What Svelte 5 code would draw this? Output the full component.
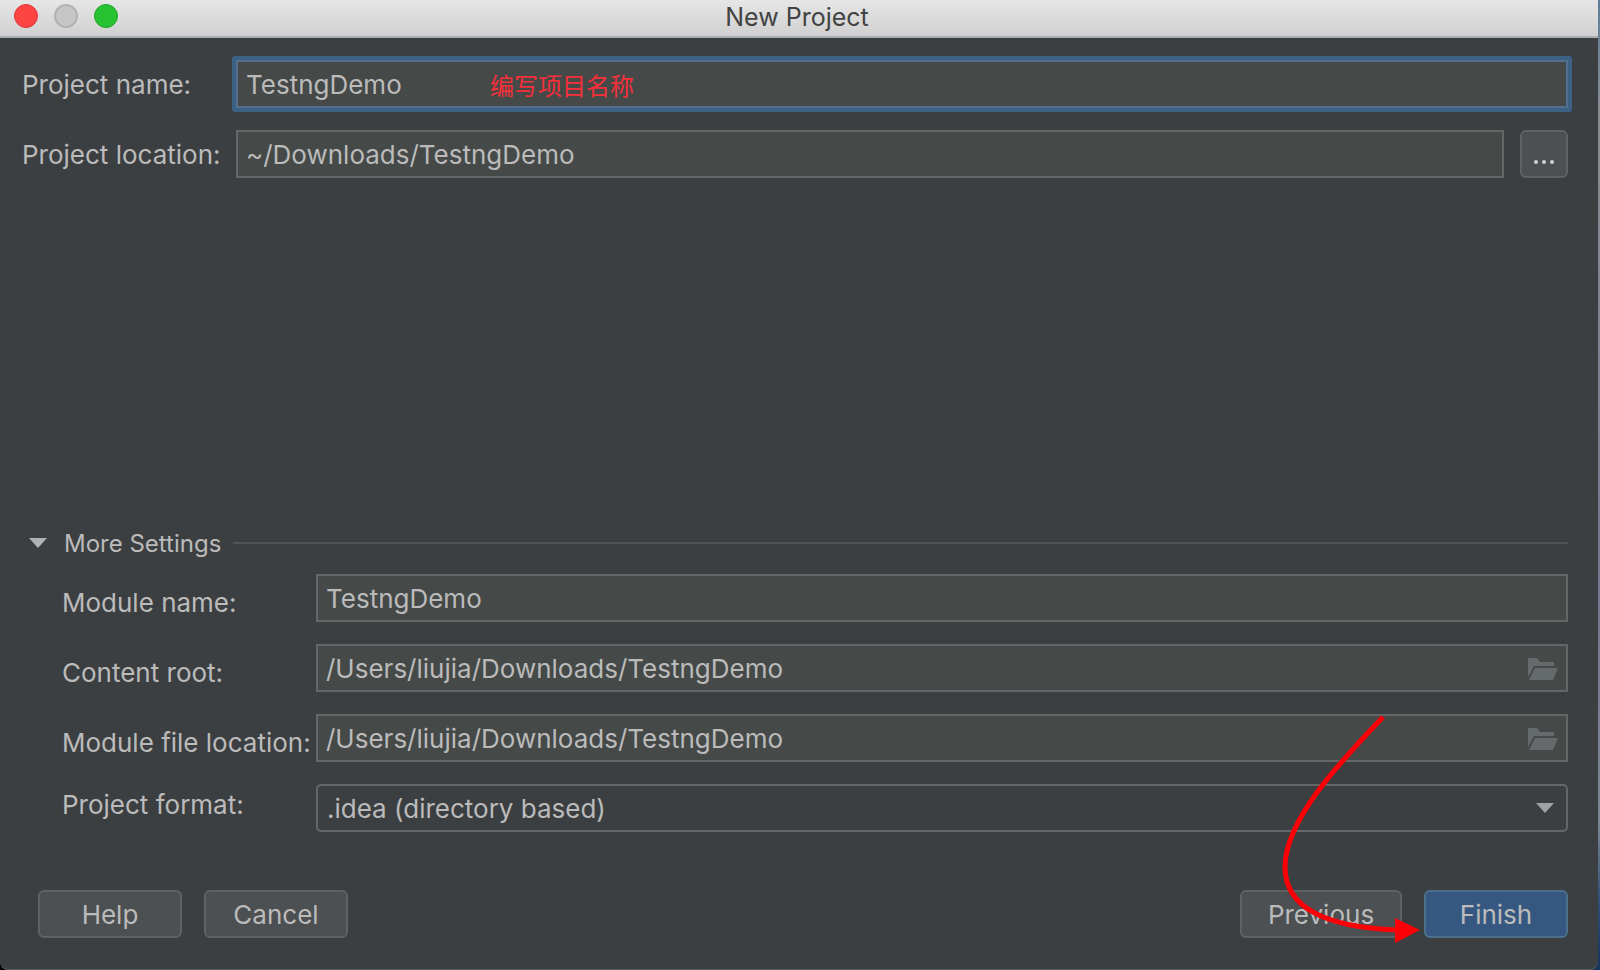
<script lang="ts">
  let projectName = $state('TestngDemo');
  let projectLocation = $state('~/Downloads/TestngDemo');
  let moduleName = $state('TestngDemo');
  let contentRoot = $state('/Users/liujia/Downloads/TestngDemo');
  let moduleLocation = $state('/Users/liujia/Downloads/TestngDemo');
  let format = $state('idea');
</script>

{#snippet folder()}
  <button type="button" class="browse" aria-label="Browse">
    <svg width="30" height="22" viewBox="0 0 30 22">
      <path d="M0 0H9L12 4H26V8H6L0 19Z" />
      <path d="M7 10H30L25 22H1Z" />
    </svg>
  </button>
{/snippet}

<div class="desktop">
  <div class="window">
    <header class="titlebar">
      <div class="lights">
        <button type="button" class="light close" aria-label="Close"></button>
        <button type="button" class="light minimize" aria-label="Minimize"></button>
        <button type="button" class="light zoom" aria-label="Zoom"></button>
      </div>
      <h1>New Project</h1>
    </header>

    <main>
      <div class="form project">
        <label for="project-name">Project name:</label>
        <div class="field focused">
          <input id="project-name" type="text" bind:value={projectName} spellcheck="false" />
          <span class="note">编写项目名称</span>
        </div>

        <label for="project-location">Project location:</label>
        <div class="with-button">
          <div class="field">
            <input id="project-location" type="text" bind:value={projectLocation} spellcheck="false" />
          </div>
          <button type="button" class="btn more" aria-label="Choose location">
            <svg width="20" height="4" viewBox="0 0 20 4">
              <circle cx="2" cy="2" r="2" />
              <circle cx="10" cy="2" r="2" />
              <circle cx="18" cy="2" r="2" />
            </svg>
          </button>
        </div>
      </div>

      <section class="settings">
        <button type="button" class="toggle" aria-expanded="true">
          <svg width="18" height="10" viewBox="0 0 18 10"><path d="M0 0H18L9 10Z" /></svg>
          <span>More Settings</span>
        </button>

        <div class="form module">
          <label class="low" for="module-name">Module name:</label>
          <div class="field">
            <input id="module-name" type="text" bind:value={moduleName} spellcheck="false" />
          </div>

          <label class="low" for="content-root">Content root:</label>
          <div class="field">
            <input id="content-root" type="text" bind:value={contentRoot} spellcheck="false" />
            {@render folder()}
          </div>

          <label class="low" for="module-location">Module file location:</label>
          <div class="field">
            <input id="module-location" type="text" bind:value={moduleLocation} spellcheck="false" />
            {@render folder()}
          </div>

          <label class="high" for="format">Project format:</label>
          <div class="combo">
            <select id="format" bind:value={format}>
              <option value="idea">.idea (directory based)</option>
              <option value="ipr">.ipr (file based)</option>
            </select>
            <svg width="18" height="10" viewBox="0 0 18 10"><path d="M0 0H18L9 10Z" /></svg>
          </div>
        </div>
      </section>

      <footer>
        <button type="button" class="btn">Help</button>
        <button type="button" class="btn">Cancel</button>
        <button type="button" class="btn previous">Previous</button>
        <button type="button" class="btn primary">Finish</button>
      </footer>
    </main>

    <!-- Hand-drawn pointer to the Finish button -->
    <svg class="pointer" width="150" height="240" viewBox="0 0 150 240" aria-hidden="true">
      <path class="line" d="M107 7C64 52 9 110 9 157C9 195 44 217 121 220" />
      <path class="head" d="M119 208L144 220L119 233Z" />
    </svg>
  </div>
</div>

<style>
  :global(body) {
    margin: 0;
    background: #0c1014;
  }

  .desktop {
    box-sizing: border-box;
    min-height: 100vh;
    padding-right: 2px;
    display: flex;
    background: linear-gradient(to bottom, #5c7d99 0, #8a8d92 12%, #77748f 60%, #7b8796 85%, #2f4d75 93%, #16345c 100%) right / 20px 100% no-repeat, #000;
    font-family: Inter, "Noto Sans CJK SC", sans-serif;
    font-size: 26px;
    line-height: 30px;
    color: #bbbbbb;
  }

  .window {
    position: relative;
    box-sizing: border-box;
    flex: 1;
    display: flex;
    flex-direction: column;
    background: #3c3f41;
    border-bottom: 1px solid #5d6062;
    border-radius: 0 0 8px 8px;
    overflow: hidden;
  }

  button,
  input,
  select {
    font: inherit;
    color: inherit;
    margin: 0;
  }

  /* Title bar */
  .titlebar {
    box-sizing: border-box;
    height: 38px;
    display: grid;
    grid-template-columns: 1fr auto 1fr;
    align-items: center;
    padding: 0 18px 4px 14px;
    background: linear-gradient(to bottom, #e6e6e6, #d0d0d0);
    border-bottom: 2px solid #a9aeb1;
  }

  .titlebar h1 {
    margin: 0;
    padding-top: 2px;
    font-size: 25px;
    font-weight: 400;
    color: #434343;
  }

  .lights {
    display: flex;
    gap: 16px;
  }

  .light {
    width: 24px;
    height: 24px;
    padding: 0;
    border: 1px solid;
    border-radius: 50%;
  }

  .close {
    background: #fc4543;
    border-color: #e0383a;
  }

  .minimize {
    background: #c6c6c6;
    border: 2px solid #b2b2b2;
  }

  .zoom {
    background: #28c132;
    border-color: #1fa528;
  }

  /* Body */
  main {
    flex: 1;
    display: flex;
    flex-direction: column;
    padding: 22px 30px 31px 22px;
  }

  .form {
    display: grid;
    row-gap: 22px;
    align-items: center;
  }

  .project {
    grid-template-columns: 214px 1fr;
  }

  .module {
    grid-template-columns: 254px 1fr;
    padding-left: 40px;
  }

  label {
    padding-top: 1px;
    white-space: nowrap;
  }

  .low {
    padding-top: 9px;
  }

  .high {
    padding: 0 0 7px;
  }

  .with-button {
    display: flex;
    gap: 16px;
  }

  .field {
    position: relative;
    box-sizing: border-box;
    flex: 1;
    height: 48px;
    display: flex;
    align-items: center;
    background: #454948;
    border: 2px solid #646767;
  }

  .field input {
    flex: 1;
    min-width: 0;
    height: 100%;
    box-sizing: border-box;
    padding: 1px 8px 0;
    border: 0;
    background: none;
    outline: none;
  }

  .focused {
    border-color: #537090;
    border-radius: 1px;
    box-shadow: 0 0 0 4px #3d6185;
  }

  .note {
    position: absolute;
    left: 252px;
    padding-top: 2px;
    font-family: "Noto Sans CJK SC", sans-serif;
    font-size: 24px;
    color: #f5303a;
    pointer-events: none;
  }

  .browse {
    display: flex;
    padding: 1px 8px 0;
    border: 0;
    background: none;
    fill: #656a6d;
  }

  .combo {
    position: relative;
    display: flex;
    align-items: center;
  }

  .combo select {
    appearance: none;
    box-sizing: border-box;
    width: 100%;
    height: 48px;
    padding: 1px 40px 0 9px;
    border: 2px solid #646767;
    border-radius: 5px;
    background: #3c3f41;
    outline: none;
  }

  .combo svg {
    position: absolute;
    right: 14px;
    fill: #9fa2a5;
    pointer-events: none;
  }

  /* More Settings */
  .settings {
    margin-top: auto;
  }

  .toggle {
    width: 100%;
    display: flex;
    align-items: center;
    padding: 0 0 0 7px;
    margin-bottom: 15px;
    border: 0;
    background: none;
    font-size: 24px;
    text-align: left;
  }

  .toggle span {
    padding-top: 2px;
  }

  .toggle svg {
    margin-right: 17px;
    fill: #afb1b3;
  }

  .toggle::after {
    content: '';
    flex: 1;
    height: 2px;
    margin-left: 12px;
    background: #515455;
  }

  /* Buttons */
  .btn {
    box-sizing: border-box;
    width: 144px;
    height: 48px;
    padding: 1px 0 0;
    border: 2px solid #5e6263;
    border-radius: 6px;
    background: #4c5052;
  }

  .more {
    width: 48px;
    display: flex;
    justify-content: center;
    padding-top: 28px;
    fill: #d0d0d0;
  }

  footer {
    display: flex;
    gap: 22px;
    margin-top: 58px;
    padding-left: 16px;
  }

  .previous {
    width: 162px;
    margin-left: auto;
  }

  .primary {
    background: #365880;
    border-color: #4c708c;
  }

  .pointer {
    position: absolute;
    right: 172px;
    bottom: 19px;
    pointer-events: none;
  }

  .line {
    fill: none;
    stroke: #fb0007;
    stroke-width: 5;
  }

  .head {
    fill: #fb0007;
  }
</style>
